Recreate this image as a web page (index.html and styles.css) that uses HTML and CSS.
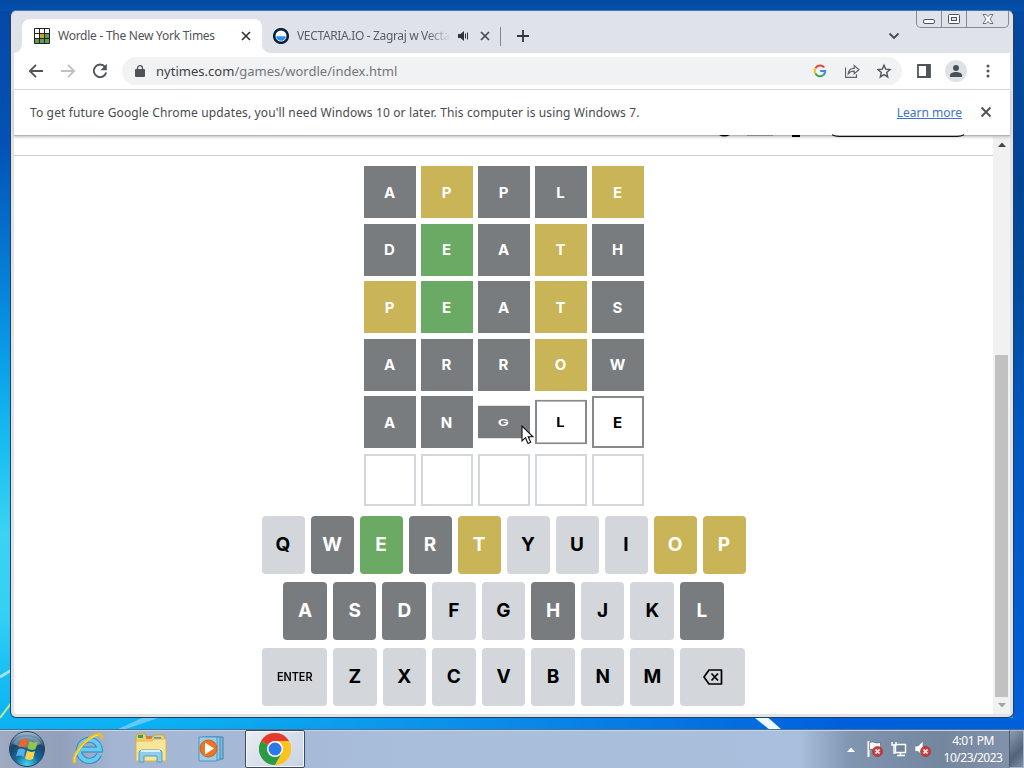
FILE: index.html
```
<!DOCTYPE html>
<html lang="en">
<head>
    <meta charset="UTF-8">
    <meta name="viewport" content="width=device-width, initial-scale=1.0">
    <title>Wordle - The New York Times</title>
    <link rel="stylesheet" href="styles.css">
</head>
<body>
    <div class="desktop">
        <svg class="wallpaper" width="1024" height="729" viewBox="0 0 1024 729">
            <path d="M0 677Q8 672 14 669" stroke="#a5e3fa" stroke-width="3" fill="none"/>
            <path d="M0 718Q6 710 12 702" stroke="#b7ee8e" stroke-width="2" fill="none"/>
            <path d="M118 729L142 718H158L126 729Z" fill="#63c9f8"/>
            <path d="M750 714H764L782 730H770Z" fill="#eef8ff"/>
        </svg>

        <div class="window">
            <div class="caption-buttons">
                <span class="cap"><svg width="14" height="14" viewBox="0 0 14 14"><rect x="1.5" y="7.5" width="11" height="4" rx="1.5" fill="#fff" stroke="#4b5361"/></svg></span>
                <span class="cap"><svg width="14" height="14" viewBox="0 0 14 14"><rect x="1.5" y="2.5" width="11" height="9" rx="1" fill="#fff" stroke="#4b5361"/><rect x="4.500" y="5.500" width="5" height="3" fill="#dfe2e9" stroke="#4b5361"/></svg></span>
                <span class="cap cap-close"><svg width="14" height="14" viewBox="0 0 14 14"><path d="M2 2.500h3.200L7 4.700 8.800 2.500H12L9 7l3 4.500H8.800L7 9.300 5.200 11.500H2L5 7Z" fill="#fff" stroke="#4b5361" stroke-width=".8"/></svg></span>
            </div>

            <!-- Tabs -->
            <div class="tabstrip">
                <div class="tab active">
                    <svg width="16" height="16" viewBox="0 0 16 16">
                        <rect width="16" height="16" rx="1" fill="#222"/>
                        <path d="M1 1h4v4H1zM6 1h4v4H6zM11 1h4v4h-4zM1 6h4v4H1z" fill="#fff"/>
                        <path d="M6 6h4v4H6z" fill="#c9a52c"/>
                        <path d="M11 6h4v4h-4zM1 11h4v4H1zM6 11h4v4H6zM11 11h4v4h-4z" fill="#5f9c4f"/>
                    </svg>
                    <span class="tab-title t1">Wordle - The New York Times</span>
                    <svg class="tab-x" width="10" height="10" viewBox="0 0 10 10"><path d="M1 1l8 8M9 1l-8 8" stroke="#333639" stroke-width="1.7"/></svg>
                </div>
                <div class="tab">
                    <svg width="16" height="16" viewBox="0 0 16 16">
                        <circle cx="8" cy="8" r="6.800" fill="#fff" stroke="#08203c" stroke-width="2.600"/>
                        <path d="M3.200 8.200h9.600a4.800 4.600 0 0 1-9.600 0z" fill="#2e8fe8"/>
                    </svg>
                    <span class="tab-title fade t2">VECTARIA.IO - Zagraj w Vecta</span>
                    <svg class="audio" width="11" height="10" viewBox="0 0 11 10"><path d="M0 3h2.500L6 0v10L2.500 7H0z" fill="#333639"/><path d="M7.500 2.500v5M9.500 1.500v7" stroke="#333639" stroke-width="1"/></svg>
                    <svg class="tab-x2" width="10" height="10" viewBox="0 0 10 10"><path d="M1 1l8 8M9 1l-8 8" stroke="#45484c" stroke-width="1.700"/></svg>
                </div>
                <span class="tab-sep"></span>
                <svg class="plus" width="12" height="12" viewBox="0 0 12 12"><path d="M6 0v12M0 6h12" stroke="#333639" stroke-width="1.800"/></svg>
                <svg class="chevron" width="12" height="8" viewBox="0 0 12 8"><path d="M1.500 1.500L6 6l4.500-4.500" stroke="#45484c" stroke-width="1.800" fill="none"/></svg>
            </div>

            <!-- Toolbar -->
            <div class="toolbar">
                <svg width="16" height="16" viewBox="0 0 16 16"><path d="M15 8H2M8 1.800L1.800 8 8 14.200" stroke="#505458" stroke-width="1.800" fill="none"/></svg>
                <svg width="16" height="16" viewBox="0 0 16 16"><path d="M1 8h13M8 1.800L14.200 8 8 14.200" stroke="#bfc1c5" stroke-width="1.800" fill="none"/></svg>
                <svg width="16" height="16" viewBox="0 0 16 16"><path d="M13 3.800A6.300 6.300 0 1 0 14.200 9.500" stroke="#505458" stroke-width="1.900" fill="none"/><path d="M14.800 0.800v6.400H8.400z" fill="#505458"/></svg>
                <div class="omnibox">
                    <svg width="10" height="12" viewBox="0 0 10 12"><rect y="4" width="10" height="8" rx="1" fill="#505458"/><path d="M2.500 5V3a2.500 2.300 0 0 1 5 0v2" stroke="#505458" stroke-width="1.300" fill="none"/></svg>
                    <span class="url">nytimes.com<span class="path">/games/wordle/index.html</span></span>
                    <svg class="google" width="14" height="14" viewBox="0 0 14 14" fill="none" stroke-width="2">
                        <path d="M11.300 3.500A5.300 5.300 0 0 0 2.400 4.400" stroke="#e8453c"/>
                        <path d="M2.400 4.400a5.300 5.300 0 0 0 0 5.200" stroke="#f7bb16"/>
                        <path d="M2.400 9.600a5.300 5.300 0 0 0 8 1.500" stroke="#36a753"/>
                        <path d="M10.400 11.100A5.300 5.300 0 0 0 12.200 7.100H7.200" stroke="#4285f4"/>
                    </svg>
                    <svg width="16" height="16" viewBox="0 0 16 16" fill="none" stroke="#5f6368" stroke-width="1.200"><path d="M.5 4.500v9.800h11v-3"/><path d="M3.200 10.800c.3-3.600 2.400-5.400 6-5.500V2.500L14 6.800l-4.800 4V8.200c-2.700 0-4.600.8-6 2.600z"/></svg>
                    <svg width="16" height="16" viewBox="0 0 16 16"><path d="M7 2.300l1.700 3.900 4.300.4-3.300 2.900 1 4.400L7 11.600l-3.700 2.300 1-4.400L1 6.600l4.300-.4z" fill="none" stroke="#505458" stroke-width="1.400"/></svg>
                </div>
                <svg width="14" height="14" viewBox="0 0 14 14"><path d="M1 1h12v12H1z" fill="none" stroke="#505458" stroke-width="1.800"/><path d="M9 1h4v12H9z" fill="#505458"/></svg>
                <span class="avatar"><svg width="14" height="14" viewBox="0 0 14 14"><circle cx="7" cy="4" r="3" fill="#4a4e57"/><path d="M1 13v-2c0-2 3.500-3 6-3s6 1 6 3v2z" fill="#4a4e57"/></svg></span>
                <svg class="dots" width="4" height="14" viewBox="0 0 4 14" fill="#505458"><circle cx="2" cy="2" r="1.500"/><circle cx="2" cy="7" r="1.500"/><circle cx="2" cy="12" r="1.500"/></svg>
            </div>

            <div class="infobar">
                <span class="info-text">To get future Google Chrome updates, you'll need Windows 10 or later. This computer is using Windows 7.</span>
                <a class="learn" href="#">Learn more</a>
                <svg width="12" height="12" viewBox="0 0 12 12"><path d="M1.500 1.500l9 9M10.500 1.500l-9 9" stroke="#505458" stroke-width="1.900"/></svg>
            </div>

            <!-- Page -->
            <div class="viewport">
                <div class="page">
                    <div class="page-header">
                        <svg width="979" height="19" viewBox="14 136 979 19">
                            <path d="M719 135q5 3 11 0z"/>
                            <path d="M747 135h26v1h-26z" fill="#888"/>
                            <path d="M792 135h8v2h-8z"/>
                            <path d="M832 134.800q3 1.500 7 1.700h118q4-.2 7-1.700" fill="none" stroke="#111" stroke-width="1.200"/>
                        </svg>
                    </div>
                    <div class="board">
                        <div class="tile absent">A</div><div class="tile present">P</div><div class="tile absent">P</div><div class="tile absent">L</div><div class="tile present">E</div>
                        <div class="tile absent">D</div><div class="tile correct">E</div><div class="tile absent">A</div><div class="tile present">T</div><div class="tile absent">H</div>
                        <div class="tile present">P</div><div class="tile correct">E</div><div class="tile absent">A</div><div class="tile present">T</div><div class="tile absent">S</div>
                        <div class="tile absent">A</div><div class="tile absent">R</div><div class="tile absent">R</div><div class="tile present">O</div><div class="tile absent">W</div>
                        <div class="tile absent">A</div><div class="tile absent">N</div><div class="tile absent flip-out">G</div><div class="tile typed flip-in">L</div><div class="tile typed">E</div>
                        <div class="tile"></div><div class="tile"></div><div class="tile"></div><div class="tile"></div><div class="tile"></div>
                    </div>
                    <div class="keyboard">
                        <div class="keys">
                            <span class="key">Q</span><span class="key absent">W</span><span class="key correct">E</span><span class="key absent">R</span><span class="key present">T</span><span class="key">Y</span><span class="key">U</span><span class="key">I</span><span class="key present">O</span><span class="key present">P</span>
                        </div>
                        <div class="keys middle">
                            <span class="key absent">A</span><span class="key absent">S</span><span class="key absent">D</span><span class="key">F</span><span class="key">G</span><span class="key absent">H</span><span class="key">J</span><span class="key">K</span><span class="key absent">L</span>
                        </div>
                        <div class="keys">
                            <span class="key wide"><span class="enter">ENTER</span></span><span class="key">Z</span><span class="key">X</span><span class="key">C</span><span class="key">V</span><span class="key">B</span><span class="key">N</span><span class="key">M</span>
                            <span class="key wide"><svg width="20" height="16" viewBox="0 0 20 16"><path d="M6 1h12.500v14H6L1 8z" fill="none" stroke="#000" stroke-width="1.700" stroke-linejoin="round"/><path d="M8.500 4.500l6.500 7M15 4.500l-6.500 7" stroke="#000" stroke-width="1.700"/></svg></span>
                        </div>
                    </div>
                </div>
                <div class="scrollbar">
                    <svg width="8" height="5" viewBox="0 0 8 5"><path d="M0 5l4-4.500L8 5z" fill="#444"/></svg>
                    <span class="thumb"></span>
                    <svg width="8" height="5" viewBox="0 0 8 5"><path d="M0 0l4 4.500L8 0z" fill="#a3a3a3"/></svg>
                </div>
            </div>
        </div>
        <svg class="cursor" width="13" height="20" viewBox="0 0 13 20"><path d="M1 1v15l3.500-3.300L7 18.500l2.700-1.200-2.500-5.500H12z" fill="#fff" stroke="#111" stroke-width="1.100"/></svg>
    </div>

    <div class="taskbar">
        <svg class="start" width="38" height="38" viewBox="0 0 38 38">
            <defs>
                <radialGradient id="orb" cx="50%" cy="95%" r="90%"><stop offset="0" stop-color="#45d8f5"/><stop offset=".4" stop-color="#13679b"/><stop offset=".75" stop-color="#1c4266"/><stop offset="1" stop-color="#9ab3c8"/></radialGradient>
            </defs>
            <circle cx="19" cy="19" r="17.500" fill="url(#orb)" stroke="#23445f"/>
            <path d="M5 14a15 12 0 0 1 28 0q-14 7-28 0z" fill="#b5cbdc" opacity=".45"/>
            <path d="M13 10q3.500-2.500 7 .5L18 18q-3.500-2.500-7.500-.5z" fill="#ee6529"/>
            <path d="M21.500 11q4 2.500 8.500 .5L27.500 19q-4 2-8-.5z" fill="#91c748"/>
            <path d="M10 19.500q3.500-2 7.500 .5L15.500 27q-3.500-2.500-7.500-.5z" fill="#58afe6"/>
            <path d="M19 20.500q4 2.500 8 .5L25 29q-4 2-8-.5z" fill="#fbd24a"/>
        </svg>
        <svg class="ie" width="34" height="34" viewBox="0 0 34 34">
            <path d="M28 22.500A10.500 10.500 0 1 1 28.800 17.500H10" fill="none" stroke="#2788c0" stroke-width="6"/>
            <path d="M28 22.500A10.500 10.500 0 1 1 28.800 17.500H10" fill="none" stroke="#68c9f1" stroke-width="4.200"/>
            <path d="M4 31C-1 26 14 5 27 2.500q4-.5 4 4" fill="none" stroke="#e9bf22" stroke-width="3"/>
            <path d="M4 30C1 25 14 6 27 3" fill="none" stroke="#ffe878" stroke-width="1"/>
        </svg>
        <svg class="folder" width="34" height="32" viewBox="0 0 34 32">
            <path d="M2 4l1-3h8l1 3h7l1-2h10l1 4v22H2z" fill="#edcf70" stroke="#c8a949"/>
            <path d="M4 2h5v3H4z" fill="#39a346"/><path d="M12 3h6v3h-6z" fill="#d97c3f"/><path d="M20 4h7v3h-7z" fill="#5994c9"/>
            <path d="M2 8h16l2-2h12v22H2z" fill="#f7e59a" stroke="#d5b85b"/>
            <path d="M5 29V20q0-3 3-3h17q3 0 3 3v9h-5v-6H10v6z" fill="#90cdec" stroke="#5a9bc4"/>
            <path d="M7 18h19" stroke="#d9f1fb" stroke-width="2"/>
        </svg>
        <svg class="player" width="28" height="28" viewBox="0 0 28 28">
            <path d="M8 2h17v22H8z" fill="#79b9dc" stroke="#3d83ad"/><path d="M4 2h18v23H4z" fill="#8dc7e5" stroke="#4b8fb8"/><path d="M1 2h18v24H1z" fill="#9dcce7" stroke="#5397c0"/>
            <circle cx="10.500" cy="13.500" r="8.500" fill="#ed7425" stroke="#cf5d18"/>
            <path d="M7 7.500l9 6-9 6z" fill="#fff"/>
        </svg>
        <div class="task-active">
            <svg width="32" height="32" viewBox="0 0 32 32">
                <circle cx="16" cy="16" r="16" fill="#fcc31e"/>
                <path d="M16 16L2.140 8A16 16 0 0 0 16 32l7-12z" fill="#2c9b48"/>
                <path d="M16 16L2.140 8A16 16 0 0 1 29.860 8H16z" fill="#e33b2e"/>
                <path d="M16 8h13.860A16 16 0 0 1 16 32l7-12z" fill="#fcc31e"/>
                <circle cx="16" cy="16" r="8" fill="#fff"/><circle cx="16" cy="16" r="6.500" fill="#2b79e9"/>
            </svg>
        </div>
        <div class="tray">
            <svg width="8" height="5" viewBox="0 0 8 5"><path d="M0 5l4-4.500L8 5z" fill="#fff"/></svg>
            <svg width="16" height="16" viewBox="0 0 16 16"><path d="M1.500 0v16" stroke="#fff" stroke-width="2"/><path d="M2.500 1.500q3-1 5 0t6 0v7q-3 1-6 0t-5 0z" fill="#fff" stroke="#4d586b" stroke-width=".6"/><circle cx="10.500" cy="10.500" r="5" fill="#d13c38" stroke="#8f2a2c" stroke-width=".6"/><path d="M8.500 8.500l4 4M12.500 8.500l-4 4" stroke="#fff" stroke-width="1.700"/></svg>
            <svg width="16" height="16" viewBox="0 0 16 16"><path d="M4.500 3.500h10v8h-10z" fill="#718199" stroke="#fff" stroke-width="1.400"/><path d="M9.500 12v2M6 14.500h8" stroke="#fff" stroke-width="1.500"/><path d="M1 1v3h4V1M3 4v8h1.500" fill="none" stroke="#fff" stroke-width="1.400"/></svg>
            <svg width="16" height="16" viewBox="0 0 16 16"><path d="M0 5h3l5-5v15L3 10.500H0z" fill="#fff" stroke="#65728a" stroke-width=".6"/><circle cx="10.500" cy="10.500" r="5" fill="#d13c38" stroke="#8f2a2c" stroke-width=".6"/><path d="M8.500 8.500l4 4M12.500 8.500l-4 4" stroke="#fff" stroke-width="1.700"/></svg>
            <div class="clock">
                <div class="time">4:01 PM</div>
                <div class="date">10/23/2023</div>
            </div>
            <span class="show-desktop"></span>
        </div>
    </div>
</body>
</html>
```
FILE: styles.css
```
* {
    box-sizing: border-box;
}

body {
    margin: 0;
    width: 1024px;
    height: 768px;
    display: flex;
    flex-direction: column;
    overflow: hidden;
    font-family: "Noto Sans", sans-serif;
    font-size: 12px;
    color: #484b4f;
}

svg {
    display: block;
    flex: none;
}

.desktop {
    position: relative;
    height: 729px;
    background:
        linear-gradient(90deg, transparent 15%, #0a8ae8 50%, #0060dc 82%) 0 718px / 100% 11px no-repeat,
        linear-gradient(#0449a0, #0250ae) 0 0 / 100% 11px no-repeat,
        linear-gradient(#0449a0 0, #024494 25%, #004c9e 40%, #0058c0 60%, #0060d8 100%) 1013px 0 / 11px 100% no-repeat,
        linear-gradient(#0747a5 0, #0253b5 20%, #0684da 40%, #0ba0e9 50%, #19bff0 62%, #3bd2f4 73%, #35d0f4 84%, #17bdf2 93%, #0ab0f2 100%);
}

.wallpaper {
    position: absolute;
    left: 0;
    top: 0;
}

.window {
    position: absolute;
    left: 10px;
    top: 10px;
    width: 1004px;
    height: 708px;
    padding: 0 3px 3px;
    display: flex;
    flex-direction: column;
    background: #dfe2e9;
    border: 1px solid #23405f;
    border-top-color: #4575ae;
    border-radius: 6px;
}

.caption-buttons {
    position: absolute;
    right: 4px;
    top: 0;
    display: flex;
    height: 17px;
    border: 1px solid #858c99;
    border-top: none;
    border-radius: 0 0 5px 5px;
}

.cap {
    width: 25px;
    display: flex;
    align-items: center;
    justify-content: center;
    border-right: 1px solid #858c99;
}

.cap-close {
    width: 41px;
    border-right: none;
}

/* tabs */
.tabstrip {
    display: flex;
    align-items: center;
    height: 42px;
    padding: 8px 0 0 8px;
}

.tab {
    display: flex;
    align-items: center;
    height: 34px;
    width: 238px;
    padding-left: 11px;
    color: #5a5d63;
}

.tab.active {
    position: relative;
    width: 240px;
    padding-left: 12px;
    background: #fff;
    border-radius: 8px 8px 0 0;
    color: #505357;
}

.tab.active::before,
.tab.active::after {
    content: "";
    position: absolute;
    bottom: 0;
    width: 8px;
    height: 8px;
}

.tab.active::before {
    left: -8px;
    background: radial-gradient(circle at 0 0, transparent 7.5px, #fff 8px);
}

.tab.active::after {
    right: -8px;
    background: radial-gradient(circle at 100% 0, transparent 7.5px, #fff 8px);
}

.tab-title {
    margin-left: 8px;
    padding-bottom: 1px;
    white-space: nowrap;
}

.t1 {
    width: 170px;
    letter-spacing: -0.26px;
}

.t2 {
    width: 153px;
    letter-spacing: -0.35px;
}

.fade {
    -webkit-mask-image: linear-gradient(90deg, #000 130px, transparent 153px);
    mask-image: linear-gradient(90deg, #000 130px, transparent 153px);
}

.tab-x {
    margin-left: 13px;
}

.audio {
    margin-left: 8px;
}

.tab-x2 {
    margin-left: 11px;
}

.tab-sep {
    width: 1px;
    height: 19px;
    background: #85888f;
}

.plus {
    margin-left: 16px;
}

.chevron {
    margin-left: auto;
    margin-right: 110px;
}

/* toolbar */
.toolbar {
    display: flex;
    align-items: center;
    height: 37px;
    padding: 0 20px 0 14px;
    gap: 16px;
    background: #fff;
    border-bottom: 1px solid #dadce0;
}

.omnibox {
    flex: 1;
    display: flex;
    align-items: center;
    height: 28px;
    margin: 0 -1px 0 -2px;
    padding: 0 9px 0 13px;
    gap: 16px;
    border-radius: 14px;
    background: #f1f2f4;
}

.url {
    margin-right: auto;
    margin-left: -5px;
    font-size: 13px;
    letter-spacing: 0.02px;
    color: #3c3f43;
    white-space: nowrap;
}

.path {
    color: #72767b;
}

.google {
    margin-right: 2px;
}

.avatar {
    width: 22px;
    height: 22px;
    margin: 0 -1px 0 -2px;
    display: flex;
    align-items: center;
    justify-content: center;
    border-radius: 50%;
    background: #dee1e6;
}

.dots {
    margin-left: 4px;
}

.infobar {
    position: relative;
    z-index: 1;
    display: flex;
    align-items: center;
    height: 46px;
    padding: 0 18px 1px 16px;
    background: #fff;
    border-bottom: 1px solid #b5b5b5;
    box-shadow: 0 1px 3px #bbb;
    white-space: nowrap;
}

.info-text {
    letter-spacing: 0.137px;
}

.learn {
    margin-left: auto;
    margin-right: 18px;
    color: #3f72c8;
}

/* page */
.viewport {
    flex: 1;
    min-height: 0;
    display: flex;
    background: #fff;
}

.page {
    width: 979px;
    display: flex;
    flex-direction: column;
    align-items: center;
}

.page-header {
    position: relative;
    z-index: 2;
    width: 979px;
    height: 20px;
    border-bottom: 1px solid #d0d1d3;
}

.page-header svg {
    overflow: visible;
}

.board {
    display: grid;
    grid-template-columns: repeat(5, 52px);
    grid-auto-rows: 52px;
    gap: 5.6px 5px;
    margin-top: 10px;
    font-family: Inter, "Liberation Sans", sans-serif;
    font-size: 15px;
    font-weight: 700;
}

.tile {
    display: flex;
    align-items: center;
    justify-content: center;
    border: 2px solid #d3d6da;
    color: #000;
}

.tile.typed {
    border-color: #878a8c;
}

.tile.flip-out {
    transform: scaleY(0.62);
}

.tile.flip-in {
    transform: scaleY(0.85);
}

.absent,
.present,
.correct {
    color: #fff !important;
}

.tile.absent,
.key.absent {
    background: #787c7e;
    border-color: #787c7e;
}

.tile.present,
.key.present {
    background: #c9b458;
    border-color: #c9b458;
}

.tile.correct,
.key.correct {
    background: #6aaa64;
    border-color: #6aaa64;
}

.keyboard {
    width: 484px;
    margin-top: 10px;
    display: flex;
    flex-direction: column;
    gap: 8px;
}

.keys {
    display: flex;
    gap: 6px;
    height: 58px;
}

.keys.middle {
    padding: 0 21.8px;
}

.key {
    flex: 1 1 0;
    display: flex;
    align-items: center;
    justify-content: center;
    border-radius: 4px;
    background: #d3d6da;
    color: #000;
    font-family: Inter, "Liberation Sans", sans-serif;
    font-size: 19px;
    font-weight: 700;
}

.key.wide {
    flex-grow: 1.5;
}

.enter {
    font-size: 12px;
    font-weight: 600;
    transform: scaleX(0.9);
}

.scrollbar {
    width: 17px;
    padding: 6px 0 6px;
    display: flex;
    flex-direction: column;
    align-items: center;
    background: #f1f1f1;
}

.thumb {
    width: 13px;
    height: 342px;
    margin: auto 0 6px;
    background: #c1c1c1;
}

.cursor {
    position: absolute;
    left: 521px;
    top: 425px;
}

/* taskbar */
.taskbar {
    height: 39px;
    display: flex;
    align-items: center;
    border-top: 1px solid #4d6f94;
    box-shadow: inset 0 1px #c5d5e8;
    background: linear-gradient(90deg, #9faac2 0, #929fb9 6%, #a3b5d2 11%, #a9bedb 40%, #a8c0dd 78%, #8095b1 83%, #74869e 92%, #8291aa 98%);
}

.start {
    margin-left: 8px;
}

.ie {
    margin-left: 25px;
}

.folder {
    margin-left: 29px;
}

.player {
    margin-left: 30px;
}

.task-active {
    width: 60px;
    height: 38px;
    margin-left: 19px;
    display: flex;
    align-items: center;
    justify-content: center;
    border: 1px solid #3b4a60;
    border-radius: 2px;
    box-shadow: inset 0 0 0 1px #f5f8fc;
    background: linear-gradient(135deg, #e9edf4, #c9d3e3);
}

.tray {
    margin-left: auto;
    height: 100%;
    display: flex;
    align-items: center;
    gap: 8px;
    color: #fff;
}

.tray > svg:first-child {
    margin-right: 4px;
}

.clock {
    width: 60px;
    margin-left: 4px;
    text-align: center;
    line-height: 17px;
    letter-spacing: -0.5px;
    white-space: nowrap;
}

.show-desktop {
    width: 15px;
    height: 38px;
    margin-left: -2px;
    border: 1px solid #a9b7ca;
    border-left-color: #4c5c73;
    background: linear-gradient(135deg, #8b9bb1, #53637a 60%, #7e8ea6);
}
```
